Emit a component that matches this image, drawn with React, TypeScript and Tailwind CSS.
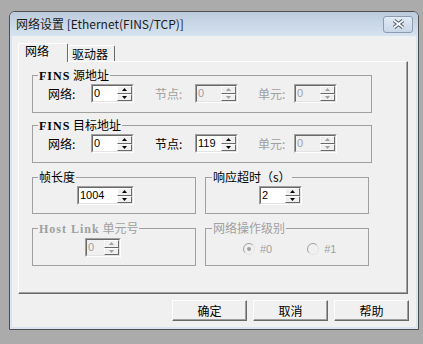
import React from "react";

const cjk = "font-['Noto_Sans_CJK_SC','Liberation_Sans',sans-serif]";
const latin = "font-['Liberation_Serif',serif] font-semibold tracking-[1px]";

function Arrow({ up, disabled }: { up?: boolean; disabled?: boolean }) {
  return (
    <svg width="5" height="3" viewBox="0 0 5 3">
      <polygon
        points={up ? "2.5,0 5,3 0,3" : "0,0 5,0 2.5,3"}
        fill={disabled ? "#a0a0a0" : "#000"}
      />
    </svg>
  );
}

function Spin({
  value,
  width,
  disabled,
}: {
  value: string;
  width: string;
  disabled?: boolean;
}) {
  const btn =
    "flex flex-1 items-center justify-center border border-t-white border-l-white border-r-[#696969] border-b-[#696969] bg-[#f0f0f0]";
  return (
    <div
      className={`${width} h-[19px] shrink-0 border border-t-[#a0a0a0] border-l-[#a0a0a0] border-r-white border-b-white`}
    >
      <div
        className={`flex h-full border border-t-[#696969] border-l-[#696969] border-r-[#e3e3e3] border-b-[#e3e3e3] ${
          disabled ? "bg-[#f0f0f0]" : "bg-white"
        }`}
      >
        <div
          className={`flex-1 pl-[1px] font-['Liberation_Sans',sans-serif] text-[11px] leading-[15px] ${
            disabled ? "text-[#a0a0a0]" : "text-black"
          }`}
        >
          {value}
        </div>
        <div className="flex w-[15px] flex-col">
          <div className={btn}>
            <Arrow up disabled={disabled} />
          </div>
          <div className={btn}>
            <Arrow disabled={disabled} />
          </div>
        </div>
      </div>
    </div>
  );
}

function Radio({ checked, label }: { checked?: boolean; label: string }) {
  return (
    <div className="flex items-center gap-[5px]">
      <svg width="12" height="12" viewBox="0 0 12 12">
        <circle cx="6" cy="6" r="5.5" fill="#f0f0f0" />
        <path d="M2.1 9.9 A5.5 5.5 0 0 1 9.9 2.1" fill="none" stroke="#a0a0a0" />
        <path d="M9.9 2.1 A5.5 5.5 0 0 1 2.1 9.9" fill="none" stroke="#e3e3e3" />
        {checked && <circle cx="6" cy="6" r="2" fill="#a0a0a0" />}
      </svg>
      <span className="font-['Liberation_Sans',sans-serif] text-[11px] text-[#a0a0a0]">
        {label}
      </span>
    </div>
  );
}

function Label({ text, width, disabled }: { text: string; width: string; disabled?: boolean }) {
  return (
    <span
      className={`${width} shrink-0 text-[12px] leading-[14px] ${
        disabled ? "text-[#a0a0a0]" : "text-black"
      }`}
    >
      {text}
    </span>
  );
}

function AddressRow({ node, nodeOn }: { node: string; nodeOn?: boolean }) {
  return (
    <div className="flex items-center pl-[15px] pt-[1px]">
      <Label text="网络:" width="w-[43px]" />
      <Spin value="0" width="w-[43px]" />
      <Label text="节点:" width="ml-[21px] w-[40px]" disabled={!nodeOn} />
      <Spin value={node} width="w-[43px]" disabled={!nodeOn} />
      <Label text="单元:" width="ml-[20px] w-[36px]" disabled />
      <Spin value="0" width="w-[43px]" disabled />
    </div>
  );
}

export default function App() {
  return (
    <div className={`h-[344px] w-[423px] bg-[#ababab] pl-[9px] pt-[11px] ${cjk}`}>
      <div className="flex h-[319px] w-[410px] flex-col overflow-hidden rounded-t-[6px] border border-[#4e4e4e] bg-[#d8e4f1]">
        {/* title bar */}
        <div className="flex h-[24px] shrink-0 items-center justify-between bg-linear-to-b from-[#bccbdc] to-[#d6e3f1] pl-[6px] pr-[5px]">
          <span className="text-[12px] text-[#1b1b1b]">网络设置 [Ethernet(FINS/TCP)]</span>
          <div className="flex h-[17px] w-[30px] items-center justify-center rounded-[3px] border border-[#8b9bb0] bg-linear-to-b from-[#e1eaf4] to-[#c9d7e6]">
            <svg width="13" height="10" viewBox="0 0 13 10">
              <path d="M2 1.5 L11 8.5 M11 1.5 L2 8.5" stroke="#4c5a6c" strokeWidth="3.6" />
              <path d="M2 1.5 L11 8.5 M11 1.5 L2 8.5" stroke="#fff" strokeWidth="1.6" />
            </svg>
          </div>
        </div>

        {/* body */}
        <div className="mx-[2px] mb-[2px] flex flex-1 flex-col bg-[#f0f0f0] pl-[6px] pr-[7px] pt-[7px]">
          {/* tabs */}
          <div className="flex items-end">
            <div className="relative z-10 -mb-px h-[19px] w-[50px] rounded-t-[2px] border border-b-0 border-t-white border-l-white border-r-[#696969] bg-[#f0f0f0] pl-[6px] text-[12px] leading-[14px]">
              网络
            </div>
            <div className="h-[16px] w-[47px] rounded-t-[2px] border border-b-0 border-t-white border-l-white border-r-[#696969] pl-[3px] pt-[1px] text-[12px] leading-[14px]">
              驱动器
            </div>
          </div>

          {/* panel */}
          <div className="h-[233px] w-[390px] border border-t-white border-l-white border-r-[#696969] border-b-[#696969] pl-[13px] pt-[6px] shadow-[inset_-1px_-1px_0_#a0a0a0]">
            <fieldset className="h-[45px] w-[340px] border border-[#a0a0a0]">
              <legend className="ml-[5px] px-[1px] text-[12px] leading-[14px]">
                <span className={latin}>FINS</span> 源地址
              </legend>
              <AddressRow node="0" />
            </fieldset>

            <fieldset className="mt-[5px] h-[45px] w-[340px] border border-[#a0a0a0]">
              <legend className="ml-[5px] px-[1px] text-[12px] leading-[14px]">
                <span className={latin}>FINS</span> 目标地址
              </legend>
              <AddressRow node="119" nodeOn />
            </fieldset>

            <div className="mt-[7px] flex gap-[9px]">
              <fieldset className="h-[44px] w-[164px] border border-[#a0a0a0]">
                <legend className="ml-[5px] px-[1px] text-[12px] leading-[14px]">帧长度</legend>
                <div className="pl-[44px] pt-[2px]">
                  <Spin value="1004" width="w-[57px]" />
                </div>
              </fieldset>
              <fieldset className="h-[44px] w-[164px] border border-[#a0a0a0]">
                <legend className="ml-[6px] px-[1px] text-[12px] leading-[14px]">响应超时（s）</legend>
                <div className="pl-[53px] pt-[2px]">
                  <Spin value="2" width="w-[43px]" />
                </div>
              </fieldset>
            </div>

            <div className="mt-[7px] flex gap-[9px]">
              <fieldset className="h-[45px] w-[164px] border border-[#a0a0a0]">
                <legend className="ml-[5px] px-[1px] text-[12px] leading-[14px] text-[#a0a0a0]">
                  <span className={latin}>Host Link</span> 单元号
                </legend>
                <div className="pl-[52px] pt-[2px]">
                  <Spin value="0" width="w-[36px]" disabled />
                </div>
              </fieldset>
              <fieldset className="h-[45px] w-[164px] border border-[#a0a0a0]">
                <legend className="ml-[6px] px-[1px] text-[12px] leading-[14px] text-[#a0a0a0]">
                  网络操作级别
                </legend>
                <div className="flex items-center gap-[35px] pl-[37px] pt-[6px]">
                  <Radio checked label="#0" />
                  <Radio label="#1" />
                </div>
              </fieldset>
            </div>
          </div>

          {/* buttons */}
          <div className="mt-[6px] flex justify-end gap-[6px]">
            {["确定", "取消", "帮助"].map((t) => (
              <button
                key={t}
                className="h-[21px] w-[75px] border border-t-white border-l-white border-r-[#696969] border-b-[#696969] bg-[#f0f0f0] text-[12px] leading-[14px] text-black shadow-[inset_-1px_-1px_0_#a0a0a0]"
              >
                {t}
              </button>
            ))}
          </div>
        </div>
      </div>
    </div>
  );
}
